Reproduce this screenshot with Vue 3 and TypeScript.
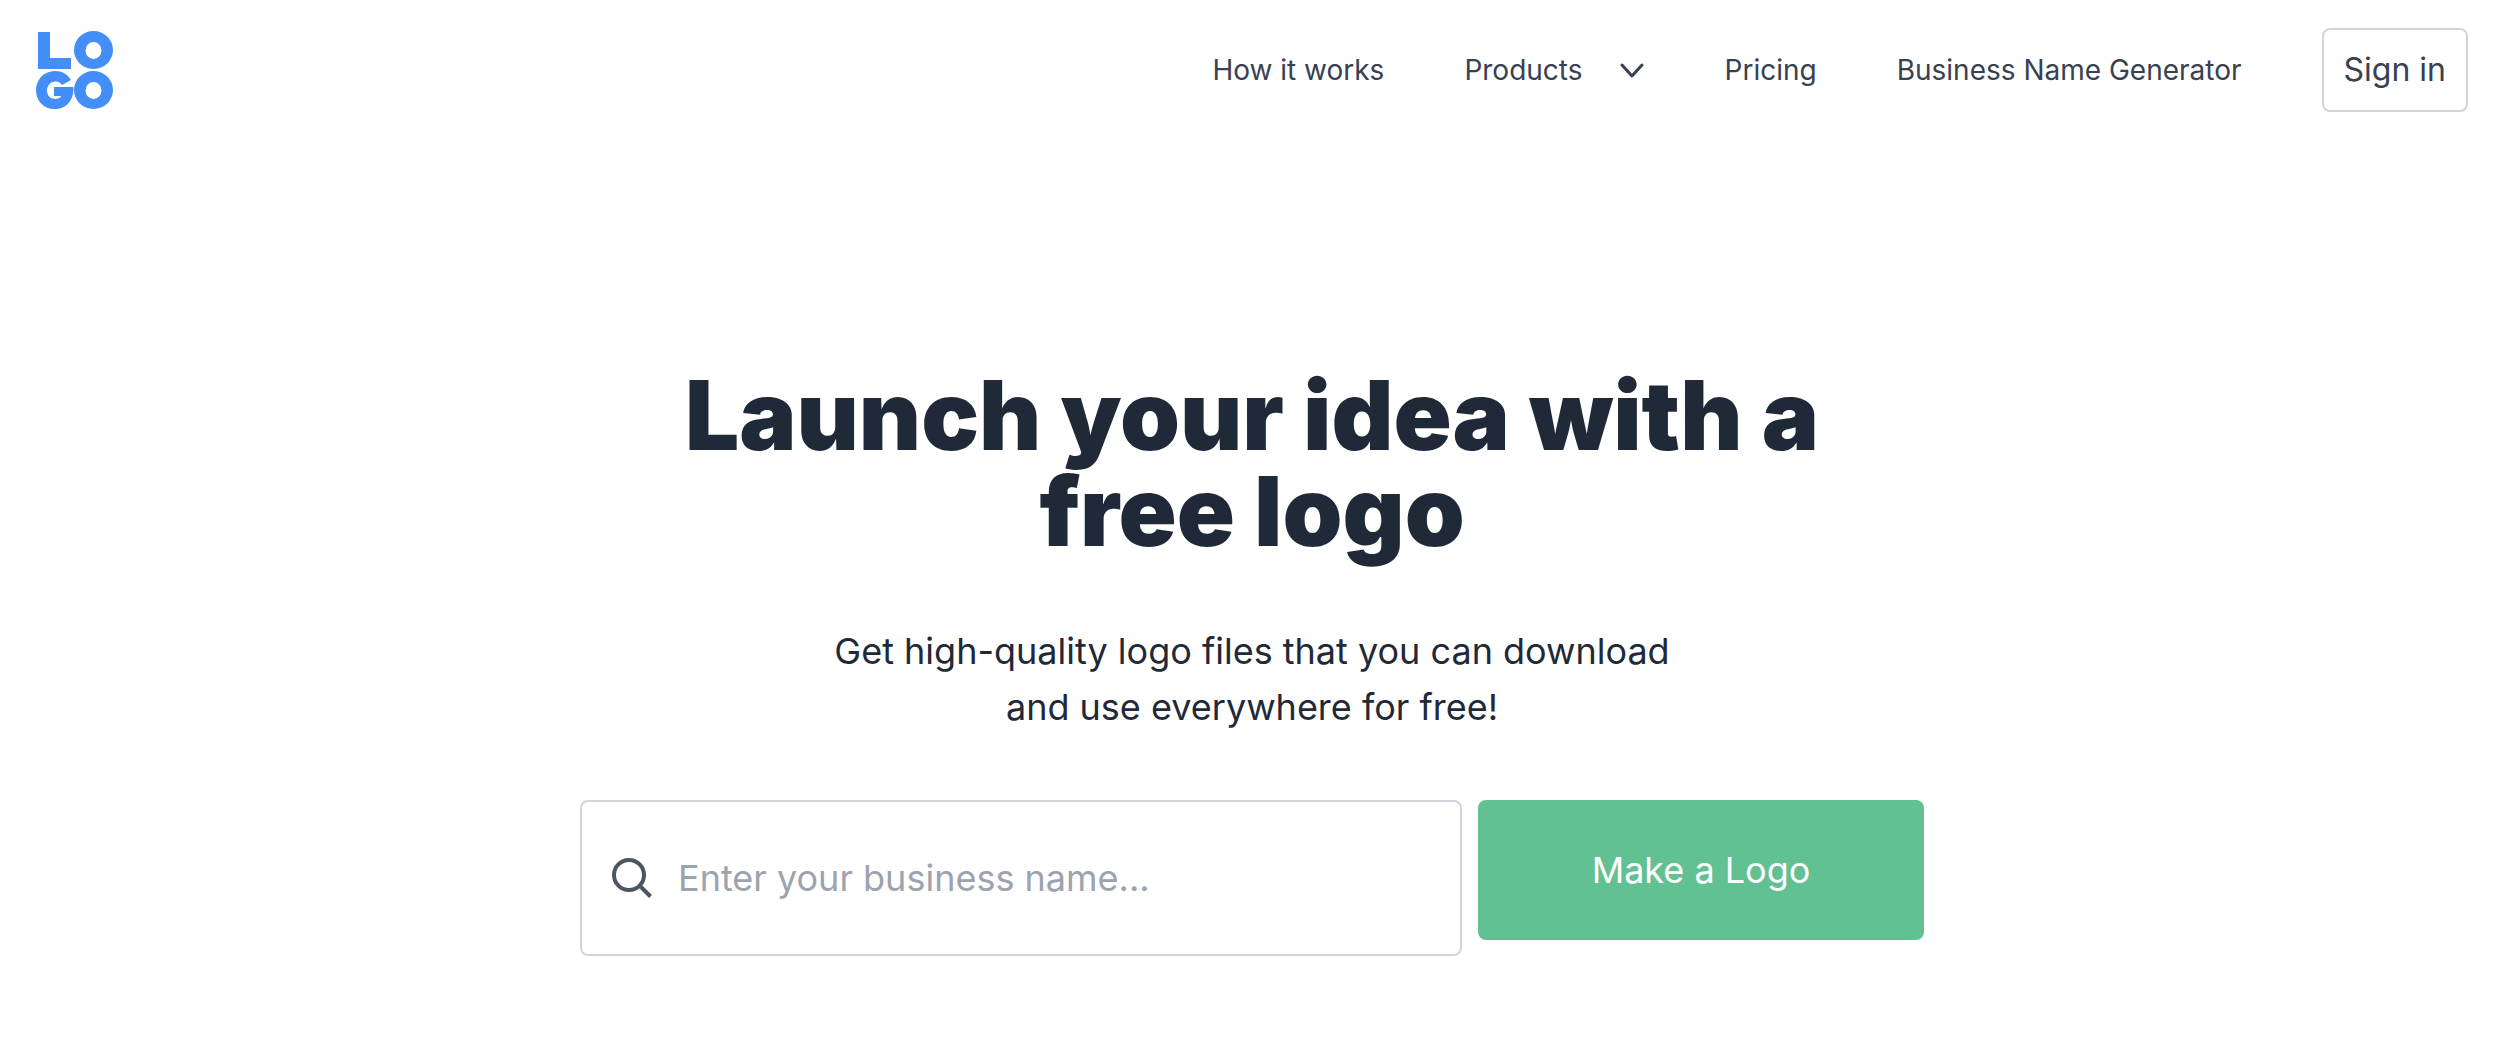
<script setup lang="ts">
import { ref } from 'vue'

interface NavItem {
  label: string
  menu?: boolean
}

const navItems: NavItem[] = [
  { label: 'How it works' },
  { label: 'Products', menu: true },
  { label: 'Pricing' },
  { label: 'Business Name Generator' },
]

const businessName = ref('')
</script>

<template>
  <div class="page">
    <header class="header">
      <a class="brand" href="#" aria-label="Logo home">
        <svg class="brand-mark" viewBox="0 0 78 78" aria-hidden="true">
          <path d="M2 1h12v26h21v11H2z" />
          <path fill-rule="evenodd" d="M57.500 0a19.500 19 0 1 1 0 38a19.500 19 0 1 1 0-38zM57.500 11a8 8.500 0 1 0 0 17a8 8.500 0 1 0 0-17z" />
          <path d="M37.500 56H18v9h7.500C24 67 22 68 19.500 68C14.500 68 11 64.500 11 59.500C11 54.500 14.500 50.500 19.500 50.500C22.500 50.500 24.500 51.800 26 54L35 49C31.500 43 26 40 19 40C8 40 0 48.500 0 59.200C0 70 8 78 18.500 78C30 78 38 70 37.500 56z" />
          <path fill-rule="evenodd" d="M57.500 40a19.500 19 0 1 1 0 38a19.500 19 0 1 1 0-38zM57.500 51a8 8.500 0 1 0 0 17a8 8.500 0 1 0 0-17z" />
        </svg>
      </a>
      <nav class="nav" aria-label="Main">
        <template v-for="item in navItems" :key="item.label">
          <button v-if="item.menu" class="nav-link nav-menu" type="button" aria-haspopup="true">
            {{ item.label }}
            <svg class="chevron" viewBox="0 0 26 26" aria-hidden="true">
              <path d="M3 8l10 11l10-11" />
            </svg>
          </button>
          <a v-else class="nav-link" href="#">{{ item.label }}</a>
        </template>
        <a class="sign-in" href="#">Sign in</a>
      </nav>
    </header>

    <main class="hero">
      <h1 class="title">Launch your idea with a free logo</h1>
      <p class="subtitle">Get high-quality logo files that you can download and use everywhere for free!</p>
      <form class="search" @submit.prevent>
        <label class="field">
          <svg class="search-icon" viewBox="0 0 40 40" aria-hidden="true">
            <circle cx="17" cy="17" r="15" />
            <path d="M28 28l10.500 10.500" />
          </svg>
          <input
            v-model="businessName"
            class="input"
            type="text"
            placeholder="Enter your business name..."
            aria-label="Business name"
          />
        </label>
        <button class="submit" type="submit">Make a Logo</button>
      </form>
    </main>
  </div>
</template>

<style>
body {
  margin: 0;
  background: #fff;
}
</style>

<style scoped>
.page {
  box-sizing: border-box;
  padding: 28px 52px 96px 36px;
  font-family: Inter, "Liberation Sans", sans-serif;
  color: #1f2937;
}

.header {
  display: flex;
  align-items: center;
  justify-content: space-between;
}

.brand,
.brand-mark {
  display: block;
}

.brand-mark {
  width: 78px;
  height: 78px;
  fill: #438ef8;
}

.nav {
  display: flex;
  align-items: center;
  gap: 80px;
}

.nav-link {
  padding: 0;
  border: 0;
  background: none;
  font: 400 28px/40px Inter, "Liberation Sans", sans-serif;
  color: #374151;
  text-decoration: none;
  white-space: nowrap;
}

.nav-menu {
  display: flex;
  align-items: center;
  gap: 36px;
}

.chevron {
  width: 26px;
  height: 26px;
  fill: none;
  stroke: #374151;
  stroke-width: 3;
  stroke-linecap: round;
  stroke-linejoin: round;
}

.sign-in {
  padding: 16px 20px;
  border: 2px solid #d1d5db;
  border-radius: 8px;
  font-size: 32px;
  line-height: 48px;
  color: #374151;
  text-decoration: none;
  white-space: nowrap;
}

.hero {
  display: flex;
  flex-direction: column;
  align-items: center;
  padding-top: 255px;
  text-align: center;
}

.title {
  max-width: 1216px;
  margin: 0;
  font-size: 96px;
  font-weight: 900;
  line-height: 96px;
}

.subtitle {
  max-width: 896px;
  margin: 64px 0 0;
  font-size: 36px;
  line-height: 56px;
}

.search {
  display: flex;
  align-items: flex-start;
  gap: 16px;
  width: 100%;
  max-width: 1344px;
  margin-top: 65px;
}

.field {
  box-sizing: border-box;
  display: flex;
  flex: 1;
  align-items: center;
  gap: 26px;
  min-width: 0;
  padding: 48px 30px;
  border: 2px solid #d1d5db;
  border-radius: 8px;
}

.search-icon {
  flex: none;
  width: 40px;
  height: 40px;
  fill: none;
  stroke: #4b5563;
  stroke-width: 4;
}

.input {
  flex: 1;
  min-width: 0;
  height: 56px;
  padding: 0;
  border: 0;
  outline: 0;
  background: transparent;
  font: 400 36px/56px Inter, "Liberation Sans", sans-serif;
  color: #1f2937;
}

.input::placeholder {
  color: #9ca3af;
  opacity: 1;
}

.submit {
  width: 446px;
  padding: 42px 32px;
  border: 0;
  border-radius: 8px;
  background: #62c192;
  font: 400 36px/56px Inter, "Liberation Sans", sans-serif;
  color: #fff;
}
</style>
